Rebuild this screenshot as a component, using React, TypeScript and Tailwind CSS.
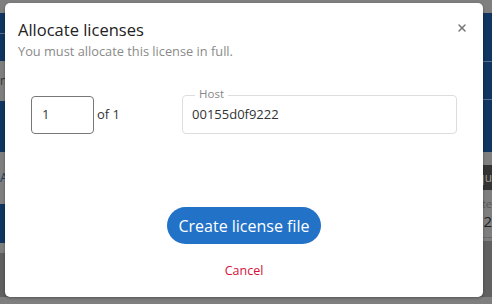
import { X } from "lucide-react";

const font = { fontFamily: '"Open Sans", "Noto Sans", sans-serif' };

export default function App() {
  return (
    <div className="relative h-[304px] w-[492px] overflow-hidden bg-[#7f7f7f]" style={font}>
      {/* page behind the overlay (already dimmed) */}
      <div className="flex h-full">
        <div className="flex w-1/2 flex-col">
          <div className="h-[13px] bg-[#7f7f7f]" />
          <div className="h-[20px] bg-[#0f3560]" />
          <div className="h-px bg-[#58708e]" />
          <div className="h-[27px] bg-[#0f3560]" />
          <div className="flex h-[40px] items-center bg-[#7f7f7f] text-[12px] text-[#333]">mmmm</div>
          <div className="h-[51px] bg-[#0f3560]" />
          <div className="flex h-[52px] items-center bg-[#7f7f7f] text-[12px] text-[#1b3c66]">All</div>
          <div className="h-[39px] bg-[#0f3560]" />
          <div className="h-[10px] bg-[#7f7f7f]" />
          <div className="flex-1 bg-[#5f5f5f]" />
          <div className="h-[7px] bg-[#7f7f7f]" />
        </div>
        <div className="flex w-1/2 flex-col">
          <div className="h-[13px] bg-[#7f7f7f]" />
          <div className="h-[48px] bg-[#0f3560]" />
          <div className="h-px bg-[#58708e]" />
          <div className="h-[37px] bg-[#0f3560]" />
          <div className="h-px bg-[#58708e]" />
          <div className="h-[52px] bg-[#0f3560]" />
          <div className="h-[13px] bg-[#7f7f7f]" />
          <div className="flex h-[25px] items-center justify-end bg-[#333] text-[12px] leading-[16px] text-[#9a9a9a]">
            Requ
          </div>
          <div className="flex h-[48px] flex-col items-end justify-center gap-[2px] border-b border-[#6a6a6a] bg-[#7f7f7f]">
            <span className="text-[11px] leading-[13px] text-[#5a5a5a]">Date</span>
            <span className="text-[15px] leading-[18px] text-[#222]">2072</span>
          </div>
          <div className="h-[3px] bg-[#7f7f7f]" />
          <div className="flex-1 bg-[#616161]" />
          <div className="h-[7px] bg-[#7f7f7f]" />
        </div>
      </div>

      {/* modal */}
      <div className="absolute left-[5px] top-[3px] flex h-[294px] w-[478px] flex-col rounded-[5px] bg-white shadow-[0_1px_3px_rgba(0,0,0,0.35)]">
        <div className="flex items-start justify-between pl-[13px] pr-[15px] pt-[16px]">
          <div>
            <h2 className="text-[16.5px] leading-[22px] text-[#222]">Allocate licenses</h2>
            <p className="mt-[1px] text-[12.8px] leading-[18px] text-[#8a8a8a]">
              You must allocate this license in full.
            </p>
          </div>
          <X className="mt-[3px] h-[12px] w-[12px] text-[#777]" strokeWidth={3} />
        </div>

        <div className="mt-[35px] flex items-center pl-[26px] pr-[26px]">
          <div className="flex h-[38px] w-[63px] items-center rounded-[4px] border border-[#777] pl-[10px] text-[13px] text-[#333]">
            1
          </div>
          <span className="ml-[3px] text-[13px] text-[#333]">of 1</span>
          <div className="relative ml-[62px] h-[39px] flex-1 rounded-[4px] border border-[#ddd]">
            <span className="absolute left-[12px] top-[-9px] bg-white px-[4px] text-[11.5px] leading-[14px] text-[#888]">
              Host
            </span>
            <div className="flex h-full items-center pl-[9px] pt-[1px] text-[13px] text-[#333]">00155d0f9222</div>
          </div>
        </div>

        <div className="mt-[73px] flex flex-col items-center">
          <button className="h-[37px] w-[154px] rounded-full bg-[#2272c8] text-[16px] text-white">
            Create license file
          </button>
          <button className="mt-[18px] text-[12.5px] leading-[18px] text-[#d4103c]">Cancel</button>
        </div>
      </div>
    </div>
  );
}
